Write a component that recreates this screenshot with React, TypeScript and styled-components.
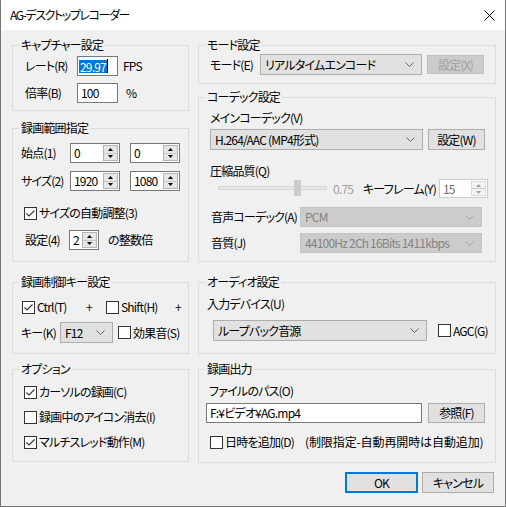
import styled, { createGlobalStyle } from "styled-components";

const GlobalStyle = createGlobalStyle`
  html, body {
    margin: 0;
    padding: 0;
    background: #ffffff;
  }
  body {
    font-family: "Noto Sans CJK JP", "Noto Sans", sans-serif;
    font-size: 12px;
    letter-spacing: -0.8px;
    color: #000;
    font-feature-settings: "palt";
  }
  * {
    box-sizing: border-box;
  }
`;

const Window = styled.div`
  width: 506px;
  height: 507px;
  border: 1px solid #767676;
  border-top: none;
  background: #f0f0f0;
  display: flex;
  flex-direction: column;
`;

const TitleBar = styled.div`
  height: 30px;
  background: #ffffff;
  display: flex;
  align-items: center;
  justify-content: space-between;
  padding: 0 10px 0 9px;
  line-height: 16px;
  letter-spacing: -1.4px;
`;

const Body = styled.div`
  flex: 1;
  padding: 8px 9px 0 11px;
`;

const Columns = styled.div`
  display: grid;
  grid-template-columns: 177px 298px;
  column-gap: 9px;
`;

const Stack = styled.div`
  display: flex;
  flex-direction: column;
`;

const Group = styled.fieldset<{ $h: number; $mt?: number }>`
  margin: ${(p) => p.$mt ?? 0}px 0 0 0;
  padding: 0;
  min-width: 0;
  height: ${(p) => p.$h}px;
  border: 1px solid #dcdcdc;
`;

const Legend = styled.legend`
  margin-left: 6px;
  padding: 0 2px;
  height: 14px;
  line-height: 14px;
`;

const Row = styled.div<{ $h?: number; $mt?: number; $pl?: number }>`
  display: flex;
  align-items: center;
  height: ${(p) => p.$h ?? 20}px;
  margin-top: ${(p) => p.$mt ?? 0}px;
  padding-left: ${(p) => p.$pl ?? 0}px;
  white-space: nowrap;

  & > * {
    flex-shrink: 0;
  }
`;

const Label = styled.span<{ $w?: number; $ml?: number; $gray?: boolean; $ls?: number }>`
  display: inline-block;
  width: ${(p) => (p.$w ? `${p.$w}px` : "auto")};
  margin-left: ${(p) => p.$ml ?? 0}px;
  color: ${(p) => (p.$gray ? "#a0a0a0" : "#000")};
  letter-spacing: ${(p) => p.$ls ?? -0.8}px;
  line-height: 16px;
`;

const TextBox = styled.div<{ $w: number; $ml?: number; $h?: number }>`
  width: ${(p) => p.$w}px;
  height: ${(p) => p.$h ?? 20}px;
  margin-left: ${(p) => p.$ml ?? 0}px;
  border: 1px solid #7a7a7a;
  background: #fff;
  display: flex;
  align-items: center;
  padding-left: 3px;
  line-height: 14px;
`;

const Selected = styled.span`
  background: #0078d7;
  color: #fff;
  margin-left: -2px;
  padding: 0 1px;
  line-height: 13px;
`;

const Caret = styled.span`
  width: 1px;
  height: 14px;
  background: #000;
`;

const SpinBox = styled.div<{ $w: number; $ml?: number; $h?: number; $disabled?: boolean }>`
  width: ${(p) => p.$w}px;
  height: ${(p) => p.$h ?? 20}px;
  margin-left: ${(p) => p.$ml ?? 0}px;
  border: 1px solid ${(p) => (p.$disabled ? "#cccccc" : "#7a7a7a")};
  background: #fff;
  display: flex;
  align-items: stretch;
  color: ${(p) => (p.$disabled ? "#6d6d6d" : "#000")};
`;

const SpinText = styled.span`
  flex: 1;
  display: flex;
  align-items: center;
  padding-left: 3px;
  line-height: 14px;
`;

const SpinButtons = styled.div<{ $disabled?: boolean }>`
  width: 15px;
  margin: 1px;
  border: 1px solid ${(p) => (p.$disabled ? "#d9d9d9" : "#b4b4b4")};
  background: ${(p) => (p.$disabled ? "#f4f4f4" : "#e6e6e6")};
  display: flex;
  flex-direction: column;
`;

const SpinHalf = styled.div<{ $top?: boolean }>`
  flex: 1;
  display: flex;
  align-items: center;
  justify-content: center;
  border-bottom: ${(p) => (p.$top ? "1px solid #c8c8c8" : "none")};
`;

const Combo = styled.div<{ $w: number; $h?: number; $disabled?: boolean }>`
  width: ${(p) => p.$w}px;
  height: ${(p) => p.$h ?? 20}px;
  border: 1px solid ${(p) => (p.$disabled ? "#c4c4c4" : "#adadad")};
  background: ${(p) => (p.$disabled ? "#cccccc" : "#e1e1e1")};
  color: ${(p) => (p.$disabled ? "#838383" : "#000")};
  display: flex;
  align-items: center;
  justify-content: space-between;
  padding: 0 7px 0 4px;
  line-height: 14px;
`;

const Button = styled.div<{ $w: number; $h?: number; $ml?: number; $disabled?: boolean; $default?: boolean }>`
  width: ${(p) => p.$w}px;
  height: ${(p) => p.$h ?? 21}px;
  margin-left: ${(p) => p.$ml ?? 0}px;
  border: ${(p) => (p.$default ? "2px solid #0078d7" : p.$disabled ? "1px solid #bfbfbf" : "1px solid #adadad")};
  background: ${(p) => (p.$disabled ? "#cccccc" : "#e1e1e1")};
  color: ${(p) => (p.$disabled ? "#a0a0a0" : "#000")};
  display: flex;
  align-items: center;
  justify-content: center;
  line-height: 14px;
`;

const CheckItem = styled.div<{ $w?: number; $ml?: number }>`
  display: flex;
  align-items: center;
  gap: 2px;
  width: ${(p) => (p.$w ? `${p.$w}px` : "auto")};
  margin-left: ${(p) => p.$ml ?? 0}px;
  line-height: 16px;
`;

const Box = styled.span`
  width: 13px;
  height: 13px;
  border: 1px solid #333333;
  background: #fff;
  display: flex;
  align-items: center;
  justify-content: center;
  flex-shrink: 0;
`;

const Slider = styled.div<{ $w: number }>`
  position: relative;
  width: ${(p) => p.$w}px;
  height: 19px;
`;

const Track = styled.div`
  position: absolute;
  left: 0;
  right: 0;
  top: 7px;
  height: 4px;
  background: #e7e7e7;
  border: 1px solid #d6d6d6;
`;

const Thumb = styled.div`
  position: absolute;
  top: 1px;
  width: 7px;
  height: 16px;
  background: #cccccc;
`;

const Footer = styled.div`
  display: flex;
  justify-content: flex-end;
  gap: 4px;
  margin-top: 9px;
  padding-right: 2px;
`;

const Chevron = ({ color = "#606060" }: { color?: string }) => (
  <svg width="9" height="5" viewBox="0 0 9 5">
    <polyline points="0.5,0.5 4.5,4.5 8.5,0.5" fill="none" stroke={color} strokeWidth="1" />
  </svg>
);

const Arrow = ({ up, color = "#000" }: { up?: boolean; color?: string }) => (
  <svg width="5" height="3" viewBox="0 0 5 3">
    <polygon points={up ? "0,3 5,3 2.5,0" : "0,0 5,0 2.5,3"} fill={color} />
  </svg>
);

const CheckBox = ({ checked }: { checked?: boolean }) => (
  <Box>
    {checked && (
      <svg width="11" height="11" viewBox="0 0 11 11">
        <polyline points="1.5,5.5 4,8 9.5,2.5" fill="none" stroke="#333" strokeWidth="1.1" />
      </svg>
    )}
  </Box>
);

const Spin = ({ w, ml, value, disabled, h }: { w: number; ml?: number; value: string; disabled?: boolean; h?: number }) => (
  <SpinBox $w={w} $ml={ml} $h={h} $disabled={disabled}>
    <SpinText>{value}</SpinText>
    <SpinButtons $disabled={disabled}>
      <SpinHalf $top>
        <Arrow up color={disabled ? "#a0a0a0" : "#000"} />
      </SpinHalf>
      <SpinHalf>
        <Arrow color={disabled ? "#a0a0a0" : "#000"} />
      </SpinHalf>
    </SpinButtons>
  </SpinBox>
);

const App = () => {
  return (
    <>
      <GlobalStyle />
      <Window>
        <TitleBar>
          <span>AG-デスクトップレコーダー</span>
          <svg width="11" height="11" viewBox="0 0 11 11">
            <path d="M0.5 0.5 L10.5 10.5 M10.5 0.5 L0.5 10.5" stroke="#000" strokeWidth="1" />
          </svg>
        </TitleBar>
        <Body>
          <Columns>
            <Stack>
              <Group $h={73}>
                <Legend>キャプチャー設定</Legend>
                <Row $mt={4} $pl={12}>
                  <Label $w={52}>レート(R)</Label>
                  <TextBox $w={41}>
                    <Selected>29.97</Selected>
                    <Caret />
                  </TextBox>
                  <Label $ml={5}>FPS</Label>
                </Row>
                <Row $mt={7} $pl={12}>
                  <Label $w={52}>倍率(B)</Label>
                  <TextBox $w={41}>100</TextBox>
                  <Label $ml={8}>%</Label>
                </Row>
              </Group>

              <Group $h={141} $mt={10}>
                <Legend>録画範囲指定</Legend>
                <Row $mt={8} $pl={8}>
                  <Label $w={49}>始点(1)</Label>
                  <Spin w={50} value="0" />
                  <Spin w={50} ml={10} value="0" />
                </Row>
                <Row $mt={8} $pl={8}>
                  <Label $w={49}>サイズ(2)</Label>
                  <Spin w={50} value="1920" />
                  <Spin w={50} ml={10} value="1080" />
                </Row>
                <Row $mt={12} $pl={11}>
                  <CheckItem>
                    <CheckBox checked />
                    サイズの自動調整(3)
                  </CheckItem>
                </Row>
                <Row $mt={7} $pl={12}>
                  <Label $w={44}>設定(4)</Label>
                  <Spin w={30} value="2" />
                  <Label $ml={9}>の整数倍</Label>
                </Row>
              </Group>
            </Stack>

            <Stack>
              <Group $h={46}>
                <Legend>モード設定</Legend>
                <Row $h={21} $mt={2} $pl={11}>
                  <Label $w={50}>モード(E)</Label>
                  <Combo $w={162} $h={21}>
                    リアルタイムエンコード
                    <Chevron />
                  </Combo>
                  <Button $w={57} $h={19} $ml={5} $disabled>
                    設定(X)
                  </Button>
                </Row>
              </Group>

              <Group $h={172} $mt={6}>
                <Legend>コーデック設定</Legend>
                <Row $h={16} $mt={6} $pl={11}>
                  <Label>メインコーデック(V)</Label>
                </Row>
                <Row $h={21} $mt={3} $pl={11}>
                  <Combo $w={213} $h={21}>
                    H.264/AAC (MP4形式)
                    <Chevron />
                  </Combo>
                  <Button $w={57} $ml={5}>
                    設定(W)
                  </Button>
                </Row>
                <Row $h={16} $mt={13} $pl={11}>
                  <Label>圧縮品質(Q)</Label>
                </Row>
                <Row $h={19} $pl={19}>
                  <Slider $w={109}>
                    <Track />
                    <Thumb style={{ left: 76 }} />
                  </Slider>
                  <Label $w={30} $ml={6} $gray>
                    0.75
                  </Label>
                  <Label $w={76}>キーフレーム(Y)</Label>
                  <Spin w={49} h={19} value="15" disabled />
                </Row>
                <Row $mt={9} $pl={12}>
                  <Label $w={89}>音声コーデック(A)</Label>
                  <Combo $w={182} $disabled>
                    PCM
                    <Chevron color="#a8a8a8" />
                  </Combo>
                </Row>
                <Row $mt={6} $pl={12}>
                  <Label $w={89}>音質(J)</Label>
                  <Combo $w={182} $disabled>
                    44100Hz 2Ch 16Bits 1411kbps
                    <Chevron color="#a8a8a8" />
                  </Combo>
                </Row>
              </Group>
            </Stack>

            <Group $h={79} $mt={13}>
              <Legend>録画制御キー設定</Legend>
              <Row $mt={8} $pl={9}>
                <CheckItem $w={64}>
                  <CheckBox checked />
                  Ctrl(T)
                </CheckItem>
                <Label $w={20}>+</Label>
                <CheckItem $w={69}>
                  <CheckBox />
                  Shift(H)
                </CheckItem>
                <Label>+</Label>
              </Row>
              <Row $h={21} $mt={5} $pl={8}>
                <Label $w={39}>キー(K)</Label>
                <Combo $w={53} $h={21}>
                  F12
                  <Chevron />
                </Combo>
                <CheckItem $ml={5}>
                  <CheckBox />
                  効果音(S)
                </CheckItem>
              </Row>
            </Group>

            <Group $h={79} $mt={13}>
              <Legend>オーディオ設定</Legend>
              <Row $h={16} $mt={7} $pl={8}>
                <Label>入力デバイス(U)</Label>
              </Row>
              <Row $h={21} $mt={8} $pl={14}>
                <Combo $w={214} $h={21}>
                  ループバック音源
                  <Chevron />
                </Combo>
                <CheckItem $ml={11}>
                  <CheckBox />
                  AGC(G)
                </CheckItem>
              </Row>
            </Group>

            <Group $h={100} $mt={8}>
              <Legend>オプション</Legend>
              <Row $mt={6} $pl={11}>
                <CheckItem>
                  <CheckBox checked />
                  カーソルの録画(C)
                </CheckItem>
              </Row>
              <Row $mt={5} $pl={11}>
                <CheckItem>
                  <CheckBox />
                  録画中のアイコン消去(I)
                </CheckItem>
              </Row>
              <Row $mt={5} $pl={11}>
                <CheckItem>
                  <CheckBox checked />
                  マルチスレッド動作(M)
                </CheckItem>
              </Row>
            </Group>

            <Group $h={101} $mt={8}>
              <Legend>録画出力</Legend>
              <Row $h={16} $mt={7} $pl={10}>
                <Label>ファイルのパス(O)</Label>
              </Row>
              <Row $mt={4} $pl={7}>
                <TextBox $w={216}>F:¥ビデオ¥AG.mp4</TextBox>
                <Button $w={57} $h={20} $ml={6}>
                  参照(F)
                </Button>
              </Row>
              <Row $mt={9} $pl={11}>
                <CheckItem $w={95}>
                  <CheckBox />
                  日時を追加(D)
                </CheckItem>
                <Label $ls={-0.1}>(制限指定-自動再開時は自動追加)</Label>
              </Row>
            </Group>
          </Columns>

          <Footer>
            <Button $w={73} $default>
              OK
            </Button>
            <Button $w={72}>キャンセル</Button>
          </Footer>
        </Body>
      </Window>
    </>
  );
};

export default App;
